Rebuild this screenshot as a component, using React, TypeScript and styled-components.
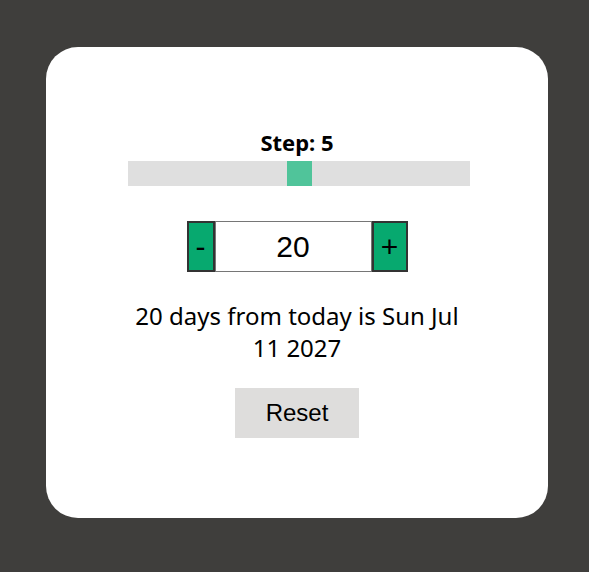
import { useState, ChangeEvent } from "react";
import styled, { createGlobalStyle } from "styled-components";

const GlobalStyle = createGlobalStyle`
  html, body {
    margin: 0;
    padding: 0;
    background: #3f3e3c;
  }
  body {
    font-family: "Noto Sans", "Open Sans", sans-serif;
  }
`;

const Page = styled.div`
  width: 589px;
  height: 572px;
  padding: 47px 0 0 46px;
  box-sizing: border-box;
`;

const Card = styled.div`
  width: 502px;
  height: 471px;
  background: #fff;
  border-radius: 32px;
  box-sizing: border-box;
  padding-top: 81px;
  display: flex;
  flex-direction: column;
  align-items: center;
`;

const StepLabel = styled.label`
  font-size: 22px;
  font-weight: 700;
  line-height: 28px;
  color: #000;
`;

const Slider = styled.input`
  -webkit-appearance: none;
  appearance: none;
  width: 342px;
  height: 25px;
  margin: 5px 0 0 4px;
  background: #dfdfdf;
  outline: none;

  &::-webkit-slider-thumb {
    -webkit-appearance: none;
    appearance: none;
    width: 25px;
    height: 25px;
    background: #50c49a;
    border: none;
    cursor: pointer;
  }
`;

const Counter = styled.div`
  display: flex;
  align-items: stretch;
  height: 51px;
  margin-top: 35px;
`;

const StepButton = styled.button<{ $w: number }>`
  width: ${({ $w }) => `${$w}px`};
  padding: 0;
  background: #07a96f;
  border: 2px solid #333;
  font-family: "Liberation Sans", Arial, sans-serif;
  font-size: 30px;
  color: #000;
  cursor: pointer;
`;

const NumberBox = styled.input`
  width: 157px;
  box-sizing: border-box;
  border: 1px solid #767676;
  text-align: center;
  font-family: "Liberation Sans", Arial, sans-serif;
  font-size: 30px;
  color: #000;
  padding: 0;
  outline: none;
`;

const Result = styled.p`
  width: 342px;
  margin: 28px 0 0;
  text-align: center;
  font-size: 24px;
  line-height: 32px;
  color: #000;
`;

const ResetButton = styled.button`
  margin-top: 24px;
  width: 124px;
  height: 50px;
  border: none;
  background: #dedddc;
  font-family: "Liberation Sans", Arial, sans-serif;
  font-size: 24px;
  color: #000;
  cursor: pointer;
`;

// "today" is pinned so the picture stays the same from one run to the next
const formatDate = (days: number): string => {
  const base = new Date(2027, 5, 21);
  base.setDate(base.getDate() + days);
  return base.toDateString();
};

const App = () => {
  const [step, setStep] = useState<number>(5);
  const [days, setDays] = useState<number>(20);

  const handleStep = (e: ChangeEvent<HTMLInputElement>): void => {
    setStep(parseInt(e.target.value) || 1);
  };

  const handleDays = (e: ChangeEvent<HTMLInputElement>): void => {
    setDays(parseInt(e.target.value) || 0);
  };

  return (
    <>
      <GlobalStyle />
      <Page>
        <Card>
          <StepLabel>{`Step: ${step}`}</StepLabel>
          <Slider type="range" min="1" max="9" value={step} onChange={handleStep} />
          <Counter>
            <StepButton $w={28} onClick={() => setDays(days - step)}>-</StepButton>
            <NumberBox type="text" value={days} onChange={handleDays} />
            <StepButton $w={36} onClick={() => setDays(days + step)}>+</StepButton>
          </Counter>
          <Result>{`${days} days from today is ${formatDate(days)}`}</Result>
          <ResetButton onClick={() => { setDays(0); setStep(1); }}>Reset</ResetButton>
        </Card>
      </Page>
    </>
  );
};

export default App;
